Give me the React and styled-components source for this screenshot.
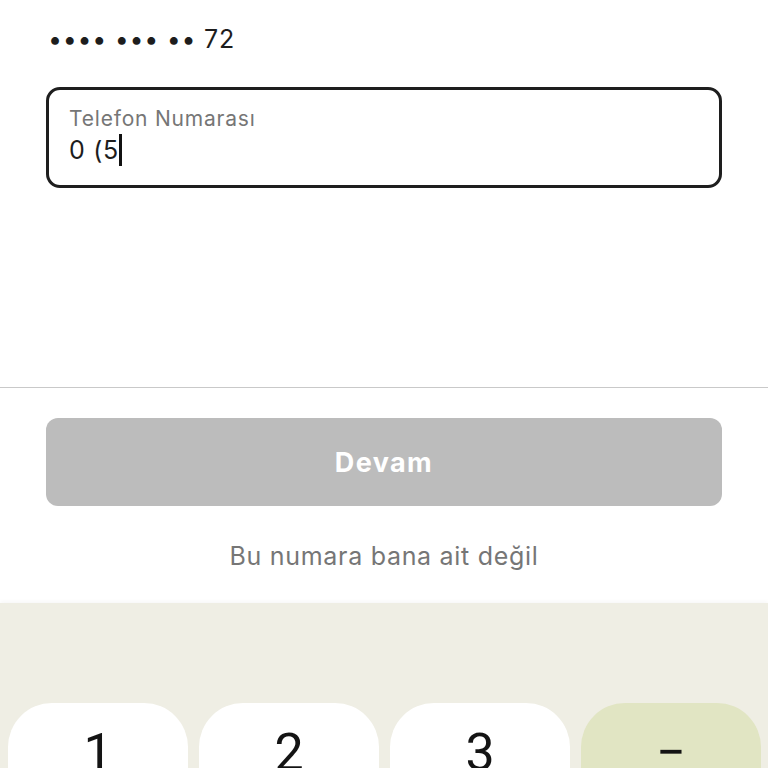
import React from "react";
import styled, { createGlobalStyle } from "styled-components";

const Global = createGlobalStyle`
  html, body { margin: 0; padding: 0; background: #ffffff; }
  body { font-family: Inter, "Noto Sans", sans-serif; }
  * { box-sizing: border-box; }
`;

const Page = styled.div`
  width: 768px;
  height: 768px;
  overflow: hidden;
  display: flex;
  flex-direction: column;
  background: #ffffff;
`;

const Top = styled.section`
  flex: 0 0 387px;
  padding: 24px 46px 0;
  display: flex;
  flex-direction: column;
`;

const Masked = styled.div`
  font-size: 25px;
  line-height: 30px;
  letter-spacing: 0.7px;
  color: #1d1d1d;
  padding-left: 2px;
`;

const Field = styled.div`
  margin-top: 33px;
  flex: 0 0 101px;
  border: 3px solid #1e1e1e;
  border-radius: 14px;
  padding: 16px 20px 0 20px;
  display: flex;
  flex-direction: column;
`;

const Label = styled.div`
  font-size: 21px;
  line-height: 26px;
  letter-spacing: 0.8px;
  color: #767676;
`;

const Value = styled.div`
  font-size: 25px;
  line-height: 36px;
  letter-spacing: 0.7px;
  color: #1d1d1d;
  display: flex;
  align-items: center;
`;

const Caret = styled.span`
  display: inline-block;
  width: 3px;
  height: 32px;
  background: #111;
`;

const Divider = styled.hr`
  flex: 0 0 1px;
  margin: 0;
  border: none;
  height: 1px;
  background: #c9c9c9;
`;

const Actions = styled.section`
  flex: 0 0 215px;
  padding: 30px 46px 0;
  display: flex;
  flex-direction: column;
  align-items: stretch;
`;

const Button = styled.button`
  height: 88px;
  border: none;
  border-radius: 12px;
  background: #bcbcbc;
  color: #ffffff;
  font-family: Inter, sans-serif;
  font-weight: 700;
  font-size: 27px;
  letter-spacing: 1.4px;
`;

const LinkText = styled.div`
  margin-top: 35px;
  text-align: center;
  font-size: 25px;
  line-height: 30px;
  letter-spacing: 0.7px;
  color: #767676;
`;

const Keypad = styled.section`
  flex: 1 0 auto;
  background: #efeee4;
  box-shadow: 0 -2px 4px rgba(0, 0, 0, 0.03);
  padding: 100px 8px 0;
  display: grid;
  grid-template-columns: repeat(4, 180px);
  column-gap: 11px;
  align-items: start;
`;

const Key = styled.div`
  height: 120px;
  border-radius: 44px;
  background: ${(p) => (p.$accent ? "#e1e5c3" : "#ffffff")};
  display: flex;
  justify-content: center;
  padding-top: 18px;
  font-family: Roboto, Inter, sans-serif;
  font-size: 52px;
  line-height: 64px;
  color: #141414;
`;

const keys = [
  { label: "1" },
  { label: "2" },
  { label: "3" },
  { label: "−", accent: true },
];

export default function App() {
  return (
    <>
      <Global />
      <Page>
        <Top>
          <Masked>•••• ••• •• 72</Masked>
          <Field>
            <Label>Telefon Numarası</Label>
            <Value>
              0 (5<Caret />
            </Value>
          </Field>
        </Top>
        <Divider />
        <Actions>
          <Button>Devam</Button>
          <LinkText>Bu numara bana ait değil</LinkText>
        </Actions>
        <Keypad>
          {keys.map((k) => (
            <Key key={k.label} $accent={k.accent}>
              {k.label}
            </Key>
          ))}
        </Keypad>
      </Page>
    </>
  );
}
